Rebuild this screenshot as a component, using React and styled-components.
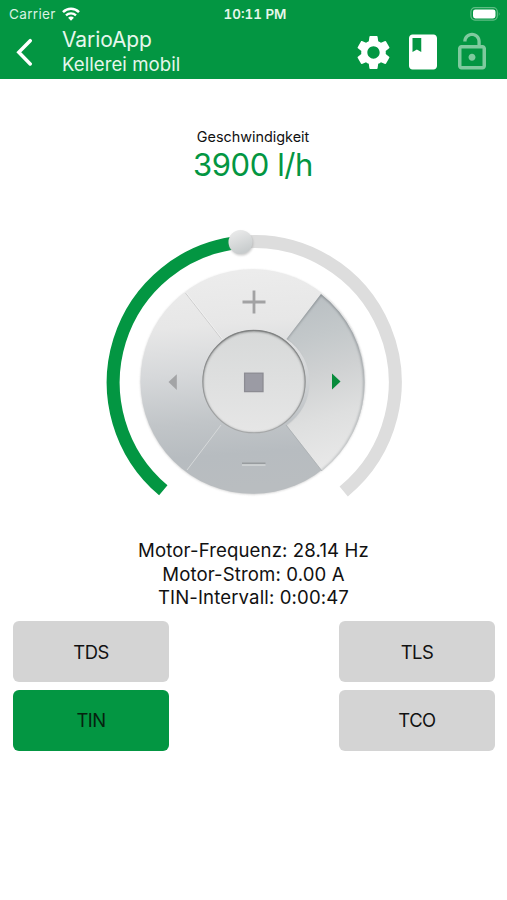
import React, { useState } from 'react';
import styled, { createGlobalStyle } from 'styled-components';
import { MdBook, MdLockOpen, MdSettings } from 'react-icons/md';

const GlobalStyle = createGlobalStyle`
	* {
		box-sizing: border-box;
	}
	body {
		margin: 0;
		background: #fff;
		color: #111;
		font-family: Inter, 'Liberation Sans', sans-serif;
	}
`;

const Screen = styled.div`
	display: flex;
	flex-direction: column;
	width: 507px;
	height: 900px;
	overflow: hidden;
	background: #fff;
`;

const Header = styled.header`
	height: 79px;
	background: #039642;
	color: #fff;
`;

const StatusBar = styled.div`
	display: grid;
	grid-template-columns: 1fr auto 1fr;
	align-items: center;
	height: 27px;
	padding: 0 6px 0 9px;
	color: #d9f2e2;
	font-size: 13.6px;
`;

const Carrier = styled.div`
	display: flex;
	align-items: center;
	gap: 6px;
	letter-spacing: 0.3px;
`;

const Clock = styled.div`
	font-weight: 600;
	font-size: 13.4px;
	font-variant-numeric: tabular-nums;
	color: #e6f7ec;
`;

const Battery = styled.svg`
	justify-self: end;
`;

const Toolbar = styled.div`
	display: flex;
	align-items: center;
	height: 50px;
	padding: 0 14.5px 0 15px;
`;

const BackButton = styled.button`
	display: flex;
	width: 47px;
	padding: 0;
	border: none;
	background: none;
	cursor: pointer;
`;

const Titles = styled.div`
	flex: 1;
`;

const Title = styled.div`
	font-size: 21px;
	line-height: 25px;
	letter-spacing: -0.1px;
	color: #e6f7ec;
`;

const Subtitle = styled.div`
	font-size: 18.6px;
	line-height: 25px;
	letter-spacing: 0.05px;
	color: #e6f7ec;
`;

const Tools = styled.div`
	display: flex;
	align-items: center;
	gap: 7px;
`;

const ToolButton = styled.button`
	display: flex;
	align-items: center;
	justify-content: center;
	width: 42px;
	height: 42px;
	padding: 0;
	border: none;
	background: none;
	color: #fff;
	cursor: pointer;
	${(props) => props.$locked && 'color: #7fca9e;'}
`;

const Speed = styled.div`
	display: flex;
	flex-direction: column;
	align-items: center;
	padding: 48px 1px 0 0;
	height: 141px;
`;

const SpeedLabel = styled.div`
	font-size: 14.4px;
	line-height: 19px;
`;

const SpeedValue = styled.div`
	font-size: 31px;
	line-height: 38px;
	letter-spacing: -0.4px;
	color: #039642;
`;

const DialWrapper = styled.div`
	display: flex;
	justify-content: center;
	height: 290px;
`;

const Readings = styled.div`
	display: flex;
	flex-direction: column;
	align-items: center;
	padding-top: 29px;
	height: 111px;
`;

const Reading = styled.div`
	font-size: 18.6px;
	line-height: 23.7px;
	letter-spacing: 0.12px;
`;

const Modes = styled.div`
	display: grid;
	grid-template-columns: 156px 156px;
	grid-auto-rows: 61px;
	justify-content: space-between;
	row-gap: 7.5px;
	padding: 0 12px 0 13px;
`;

const ModeButton = styled.button`
	border: none;
	border-radius: 6px;
	background: #d4d4d4;
	color: #111;
	font-family: inherit;
	font-size: 18.4px;
	letter-spacing: -0.5px;
	cursor: pointer;
	${(props) => props.$active && 'background: #039642; color: #06230f;'}
`;

function Dial() {
	return (
		<svg width="310" height="290" viewBox="99 220 310 290">
			<defs>
				<linearGradient id="disc" x1="0" y1="0" x2="0.08" y2="1">
					<stop offset="0" stopColor="#ededed" />
					<stop offset="0.27" stopColor="#e7e7e7" />
					<stop offset="0.48" stopColor="#d6d8da" />
					<stop offset="0.7" stopColor="#c1c5c8" />
					<stop offset="0.85" stopColor="#b7bcc0" />
					<stop offset="1" stopColor="#b9bdc0" />
				</linearGradient>
				<linearGradient id="pressed" x1="0" y1="0" x2="0.15" y2="1">
					<stop offset="0" stopColor="#b6bcc0" />
					<stop offset="0.3" stopColor="#c3c8ca" />
					<stop offset="0.5" stopColor="#cfd1d2" />
					<stop offset="0.75" stopColor="#dedfdf" />
					<stop offset="1" stopColor="#e8e8e8" />
				</linearGradient>
				<linearGradient id="hub" x1="0" y1="0" x2="0" y2="1">
					<stop offset="0" stopColor="#d7d9d9" />
					<stop offset="1" stopColor="#e6e6e6" />
				</linearGradient>
				<linearGradient id="hubEdge" x1="0" y1="0" x2="0" y2="1">
					<stop offset="0" stopColor="#7f8181" />
					<stop offset="1" stopColor="#a5a7a8" />
				</linearGradient>
				<linearGradient id="knob" x1="0" y1="0" x2="0.4" y2="1">
					<stop offset="0" stopColor="#eeeeee" />
					<stop offset="1" stopColor="#c8cccd" />
				</linearGradient>
				<linearGradient id="rim" gradientUnits="userSpaceOnUse" x1="0" y1="294" x2="0" y2="471">
					<stop offset="0" stopColor="#888e92" />
					<stop offset="1" stopColor="#c0c3c4" />
				</linearGradient>
				<filter id="soft" x="-20%" y="-20%" width="140%" height="140%">
					<feGaussianBlur stdDeviation="1.3" />
				</filter>
				<clipPath id="pressedClip">
					<path d="M321 294 A112.5 112.5 0 0 1 322 471 L286.5 425 A51.5 51.5 0 0 0 286.5 339 Z" />
				</clipPath>
				<clipPath id="hubClip">
					<circle cx="254" cy="381.6" r="51.5" />
				</clipPath>
			</defs>

			<path d="M163.3 490.3 A141 141 0 0 1 240.5 242.2" fill="none" stroke="#039642" strokeWidth="13" />
			<path d="M240.5 242.2 A141 141 0 0 1 343.7 491.5" fill="none" stroke="#dddddd" strokeWidth="13" />
			<circle cx="241.2" cy="243.4" r="12" fill="#999" opacity="0.5" filter="url(#soft)" />
			<circle cx="240.5" cy="242" r="12" fill="url(#knob)" />

			<circle cx="252.7" cy="382.2" r="112.2" fill="#aaa" opacity="0.6" filter="url(#soft)" />
			<circle cx="252.7" cy="381.6" r="112.2" fill="url(#disc)" />
			<g clipPath="url(#pressedClip)">
				<rect x="280" y="290" width="90" height="185" fill="url(#pressed)" />
				<path
					d="M286 339 L321 294 A112.5 112.5 0 0 1 322 471"
					fill="none"
					stroke="url(#rim)"
					strokeWidth="2.4"
					filter="url(#soft)"
				/>
				<circle cx="254" cy="382" r="52" fill="none" stroke="#999" strokeWidth="3" filter="url(#soft)" />
			</g>
			<path d="M185.5 293 L221.5 339" stroke="#cdcdcd" />
			<path d="M186.5 293 L222.5 339" stroke="#f4f4f4" strokeWidth="0.7" />
			<path d="M187 470 L221 425" stroke="#d6d9da" />
			<path d="M286 425 L322 471" stroke="#a9aeb1" strokeWidth="0.8" />

			<circle cx="254" cy="381.6" r="51.5" fill="url(#hub)" />
			<g clipPath="url(#hubClip)">
				<circle
					cx="254"
					cy="382"
					r="52"
					fill="none"
					stroke="url(#hubEdge)"
					strokeWidth="2.8"
					filter="url(#soft)"
				/>
			</g>
			<circle cx="254" cy="381.6" r="51.2" fill="none" stroke="url(#hubEdge)" strokeWidth="1.1" />
			<path d="M254 290.5 V313.5 M242.5 302 H265.5" stroke="#a2a2a3" strokeWidth="2.8" />
			<path d="M242 463.4 H265.5" stroke="#989c9f" strokeWidth="1.8" />
			<path d="M242 465 H265.5" stroke="#d9dbdc" strokeWidth="1.3" />
			<path d="M168.5 382 L176.8 374.3 V390 Z" fill="#a3a4a6" />
			<path d="M332 373.5 V389.5 L340.5 381.5 Z" fill="#078b3b" />
			<rect x="244.6" y="373.2" width="18.4" height="18.4" fill="#9b9ba4" stroke="#8c8c93" strokeWidth="1.3" />
		</svg>
	);
}

function WifiIcon() {
	return (
		<svg width="18" height="14" viewBox="0 0 18 14" fill="none" stroke="#fff">
			<path d="M1 5.2 C5.5 0.7 12.5 0.7 17 5.2" strokeWidth="2.5" />
			<path d="M4 8.3 C6.8 5.6 11.2 5.6 14 8.3" strokeWidth="2.3" />
			<path d="M6.1 10.7 C7.7 9.2 10.3 9.2 11.9 10.7 L9 13.7 Z" fill="#fff" stroke="none" />
		</svg>
	);
}

function App() {
	const modes = [ 'TDS', 'TLS', 'TIN', 'TCO' ];
	const [ mode, setMode ] = useState('TIN');

	return (
		<Screen>
			<GlobalStyle />
			<Header>
				<StatusBar>
					<Carrier>
						Carrier
						<WifiIcon />
					</Carrier>
					<Clock>10:11 PM</Clock>
					<Battery width="31" height="14" viewBox="0 0 31 14">
						<rect x="0.9" y="0.7" width="26.4" height="12.4" rx="4" fill="none" stroke="#5fbd84" strokeWidth="1.2" />
						<rect x="3" y="2.4" width="22.5" height="9" rx="2.4" fill="#fff" />
						<path d="M28.8 4.8 Q30.5 7 28.8 9.2 Z" fill="#5fbd84" />
					</Battery>
				</StatusBar>
				<Toolbar>
					<BackButton aria-label="back">
						<svg width="20" height="28" viewBox="0 0 20 28">
							<path
								d="M15.2 2.7 L3.8 14.3 L15.2 25.9"
								fill="none"
								stroke="#fff"
								strokeWidth="3.5"
								strokeLinecap="round"
							/>
						</svg>
					</BackButton>
					<Titles>
						<Title>VarioApp</Title>
						<Subtitle>Kellerei mobil</Subtitle>
					</Titles>
					<Tools>
						<ToolButton>
							<MdSettings size={41} />
						</ToolButton>
						<ToolButton>
							<MdBook size={42} />
						</ToolButton>
						<ToolButton $locked>
							<MdLockOpen size={42} />
						</ToolButton>
					</Tools>
				</Toolbar>
			</Header>

			<Speed>
				<SpeedLabel>Geschwindigkeit</SpeedLabel>
				<SpeedValue>3900 l/h</SpeedValue>
			</Speed>

			<DialWrapper>
				<Dial />
			</DialWrapper>

			<Readings>
				<Reading>Motor-Frequenz: 28.14 Hz</Reading>
				<Reading>Motor-Strom: 0.00 A</Reading>
				<Reading>TIN-Intervall: 0:00:47</Reading>
			</Readings>

			<Modes>
				{modes.map((name) => (
					<ModeButton key={name} $active={mode === name} onClick={() => setMode(name)}>
						{name}
					</ModeButton>
				))}
			</Modes>
		</Screen>
	);
}

export default App;
